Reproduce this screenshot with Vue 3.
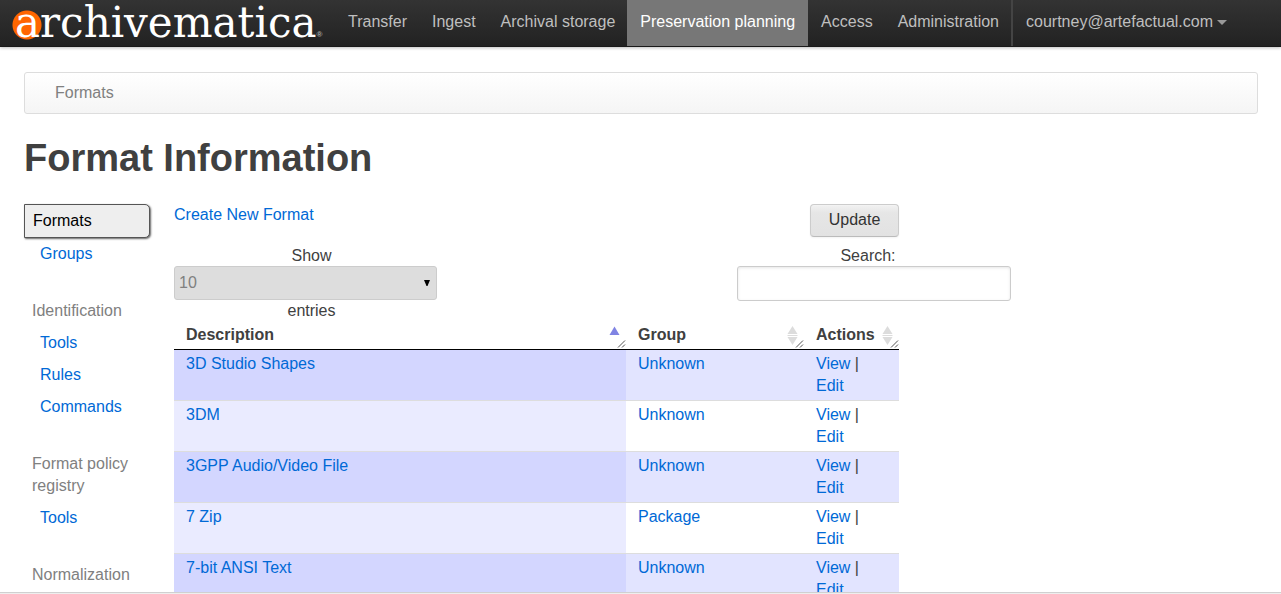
<script setup>
import { ref } from 'vue'

const tabs = ['Transfer', 'Ingest', 'Archival storage', 'Preservation planning', 'Access', 'Administration']
const activeTab = 'Preservation planning'

const sections = [
  { title: 'Identification', links: ['Tools', 'Rules', 'Commands'] },
  { title: 'Format policy registry', links: ['Tools'] },
  { title: 'Normalization', links: [] },
]

const columns = [
  { key: 'description', label: 'Description', sorted: true },
  { key: 'group', label: 'Group', sorted: false },
  { key: 'actions', label: 'Actions', sorted: false },
]

const formats = [
  { name: '3D Studio Shapes', group: 'Unknown' },
  { name: '3DM', group: 'Unknown' },
  { name: '3GPP Audio/Video File', group: 'Unknown' },
  { name: '7 Zip', group: 'Package' },
  { name: '7-bit ANSI Text', group: 'Unknown' },
]

const pageSize = ref('10')
const query = ref('')
</script>

<template>
  <div class="shell">
    <header class="topbar">
      <a class="brand" href="#"><span class="brand-name">archivematica</span><span class="brand-mark">®</span></a>
      <nav class="tabs">
        <a v-for="tab in tabs" :key="tab" href="#" class="tab" :class="{ active: tab === activeTab }">{{ tab }}</a>
      </nav>
      <a class="tab user" href="#">courtney@artefactual.com
        <svg class="caret" width="10" height="5" viewBox="0 0 10 5" aria-hidden="true"><path d="M0 0h10L5 5z" fill="#999" /></svg>
      </a>
    </header>

    <div class="page">
      <div class="breadcrumb">Formats</div>
      <h1>Format Information</h1>

      <div class="columns">
        <nav class="sidebar">
          <a class="current" href="#">Formats</a>
          <a class="side-link" href="#">Groups</a>
          <section v-for="section in sections" :key="section.title" class="side-section">
            <div class="side-title">{{ section.title }}</div>
            <a v-for="link in section.links" :key="link" class="side-link" href="#">{{ link }}</a>
          </section>
        </nav>

        <main class="content">
          <div class="toolbar">
            <a href="#">Create New Format</a>
            <button type="button" class="update">Update</button>
          </div>

          <div class="filters">
            <div class="length">
              <label for="page-size">Show</label>
              <div class="select-wrap">
                <select id="page-size" v-model="pageSize">
                  <option>10</option>
                  <option>25</option>
                  <option>50</option>
                  <option>100</option>
                </select>
                <svg class="select-arrow" width="6" height="6" viewBox="0 0 6 6" aria-hidden="true"><path d="M0 0h6L3.5 6h-1z" fill="#000" /></svg>
              </div>
              <span>entries</span>
            </div>
            <div class="search">
              <label for="search">Search:</label>
              <input id="search" v-model="query" type="text" />
            </div>
          </div>

          <table>
            <thead>
              <tr>
                <th v-for="column in columns" :key="column.key" :class="column.key">
                  <div class="head">
                    <span>{{ column.label }}</span>
                    <svg width="20" height="27" viewBox="0 0 20 27" aria-hidden="true">
                      <path v-if="column.sorted" d="M8.500 4.500 13.500 13h-10z" fill="#8084e3" />
                      <path v-else d="M8.500 4 13.500 12h-10zM3.500 13h10v1h-10zM3.500 15h10L8.500 23z" fill="#dcdcdc" />
                      <path d="M12 25.500l7-7M16 25.500l3-3" stroke="#555" stroke-width="1" fill="none" />
                    </svg>
                  </div>
                </th>
              </tr>
            </thead>
            <tbody>
              <tr v-for="format in formats" :key="format.name">
                <td class="sorted"><a href="#">{{ format.name }}</a></td>
                <td><a href="#">{{ format.group }}</a></td>
                <td><a href="#">View</a> | <a href="#">Edit</a></td>
              </tr>
            </tbody>
          </table>
        </main>
      </div>
    </div>
    <div class="footer-line"></div>
  </div>
</template>

<style>
body {
  margin: 0;
  background: #fff;
}
</style>

<style scoped>
.shell {
  display: flex;
  flex-direction: column;
  height: 100vh;
  overflow: hidden;
  font: 16px/22px "Liberation Sans", Arial, sans-serif;
  color: #404040;
}

.shell * {
  box-sizing: border-box;
}

a {
  color: #0069d6;
  text-decoration: none;
}

.topbar {
  position: relative;
  flex: none;
  display: flex;
  height: 47px;
  padding-left: 12px;
  background: linear-gradient(#333, #222);
  border-bottom: 1px solid #1a1a1a;
  box-shadow: 0 1px 3px rgba(0, 0, 0, 0.25);
}

.brand {
  display: flex;
  width: 323px;
  color: #fff;
  background: radial-gradient(circle at 15px 25px, #f60 14px, transparent 15px) 0 0 / 100% 40px no-repeat;
}

.brand-name {
  padding-left: 3px;
  font-family: "DejaVu Serif", serif;
  font-size: 42px;
  line-height: 46px;
}

.brand-mark {
  align-self: flex-end;
  padding-bottom: 6px;
  font-size: 8px;
  font-weight: bold;
  line-height: 10px;
  color: #aaa;
}

.tabs {
  display: flex;
}

.tab {
  height: 46px;
  padding: 11px 12px 13px 13px;
  color: #bfbfbf;
  white-space: nowrap;
}

.tab.active {
  padding-right: 13px;
  background: #777;
  color: #fff;
}

.user {
  border-left: 2px solid #444;
}

.caret {
  vertical-align: 2px;
}

.page {
  flex: 1;
  min-height: 0;
  overflow: hidden;
  padding: 25px 23px 0 24px;
}

.breadcrumb {
  padding: 9px 30px;
  border: 1px solid #ddd;
  border-radius: 3px;
  background: linear-gradient(#fff, #f5f5f5);
  color: #808080;
}

h1 {
  margin: 26px 0 28px;
  font-size: 38px;
  line-height: 36px;
}

.columns {
  display: flex;
  gap: 24px;
}

.sidebar {
  flex: none;
  display: flex;
  flex-direction: column;
  width: 126px;
}

.current {
  padding: 5px 8px;
  border: 1px solid #555;
  border-radius: 0 5px 5px 0;
  background: #eee;
  box-shadow: 1px 1px 2px #666;
  color: #000;
}

.side-link {
  padding: 5px 0 5px 16px;
}

.side-section {
  display: flex;
  flex-direction: column;
  margin-top: 25px;
}

.side-title {
  padding: 5px 8px;
  color: #808080;
}

.content {
  width: 725px;
}

.toolbar {
  display: flex;
  justify-content: space-between;
  height: 40px;
}

.update {
  width: 89px;
  height: 33px;
  padding: 0 0 2px;
  border: 1px solid #ccc;
  border-bottom-color: #bbb;
  border-radius: 4px;
  background: linear-gradient(#f2f2f2, #e6e6e6 25%, #e2e2e2);
  box-shadow: inset 0 1px 0 rgba(255, 255, 255, 0.2), 0 1px 2px rgba(0, 0, 0, 0.05);
  font: inherit;
  color: #333;
}

.filters {
  display: grid;
  grid-template-columns: 275px 262px;
  column-gap: 288px;
  width: max-content;
}

.length,
.search {
  display: flex;
  flex-direction: column;
  text-align: center;
}

.filters label {
  height: 22px;
  line-height: 24px;
}

.select-wrap {
  position: relative;
  width: 263px;
}

select {
  display: block;
  width: 100%;
  height: 34px;
  padding: 0 4px;
  border: 1px solid #ccc;
  border-radius: 3px;
  appearance: none;
  background: #ddd;
  font: inherit;
  color: #808080;
}

.select-arrow {
  position: absolute;
  top: 14px;
  right: 7px;
}

input {
  width: 274px;
  height: 35px;
  padding: 4px;
  border: 1px solid #ccc;
  border-radius: 3px;
  background: #fff;
  box-shadow: inset 0 1px 3px rgba(0, 0, 0, 0.1);
  font: inherit;
  color: #808080;
}

table {
  width: 100%;
  table-layout: fixed;
  border-collapse: separate;
  border-spacing: 0;
}

th {
  padding: 0 0 0 12px;
  border-bottom: 1px solid #000;
  text-align: left;
}

.group {
  width: 178px;
}

.actions {
  width: 95px;
}

.head {
  display: flex;
  justify-content: space-between;
  height: 27px;
}

.head span {
  padding-top: 2px;
}

td {
  padding: 3px 12px;
  border-bottom: 1px solid #ddd;
  vertical-align: top;
}

tbody tr:nth-child(odd) td {
  background: #e2e4ff;
}

tbody tr .sorted {
  background: #eaebff;
}

tbody tr:nth-child(odd) .sorted {
  background: #d3d6ff;
}

.footer-line {
  flex: none;
  height: 2px;
  border-top: 1px solid #d0d0d0;
  background: #eee;
}
</style>
